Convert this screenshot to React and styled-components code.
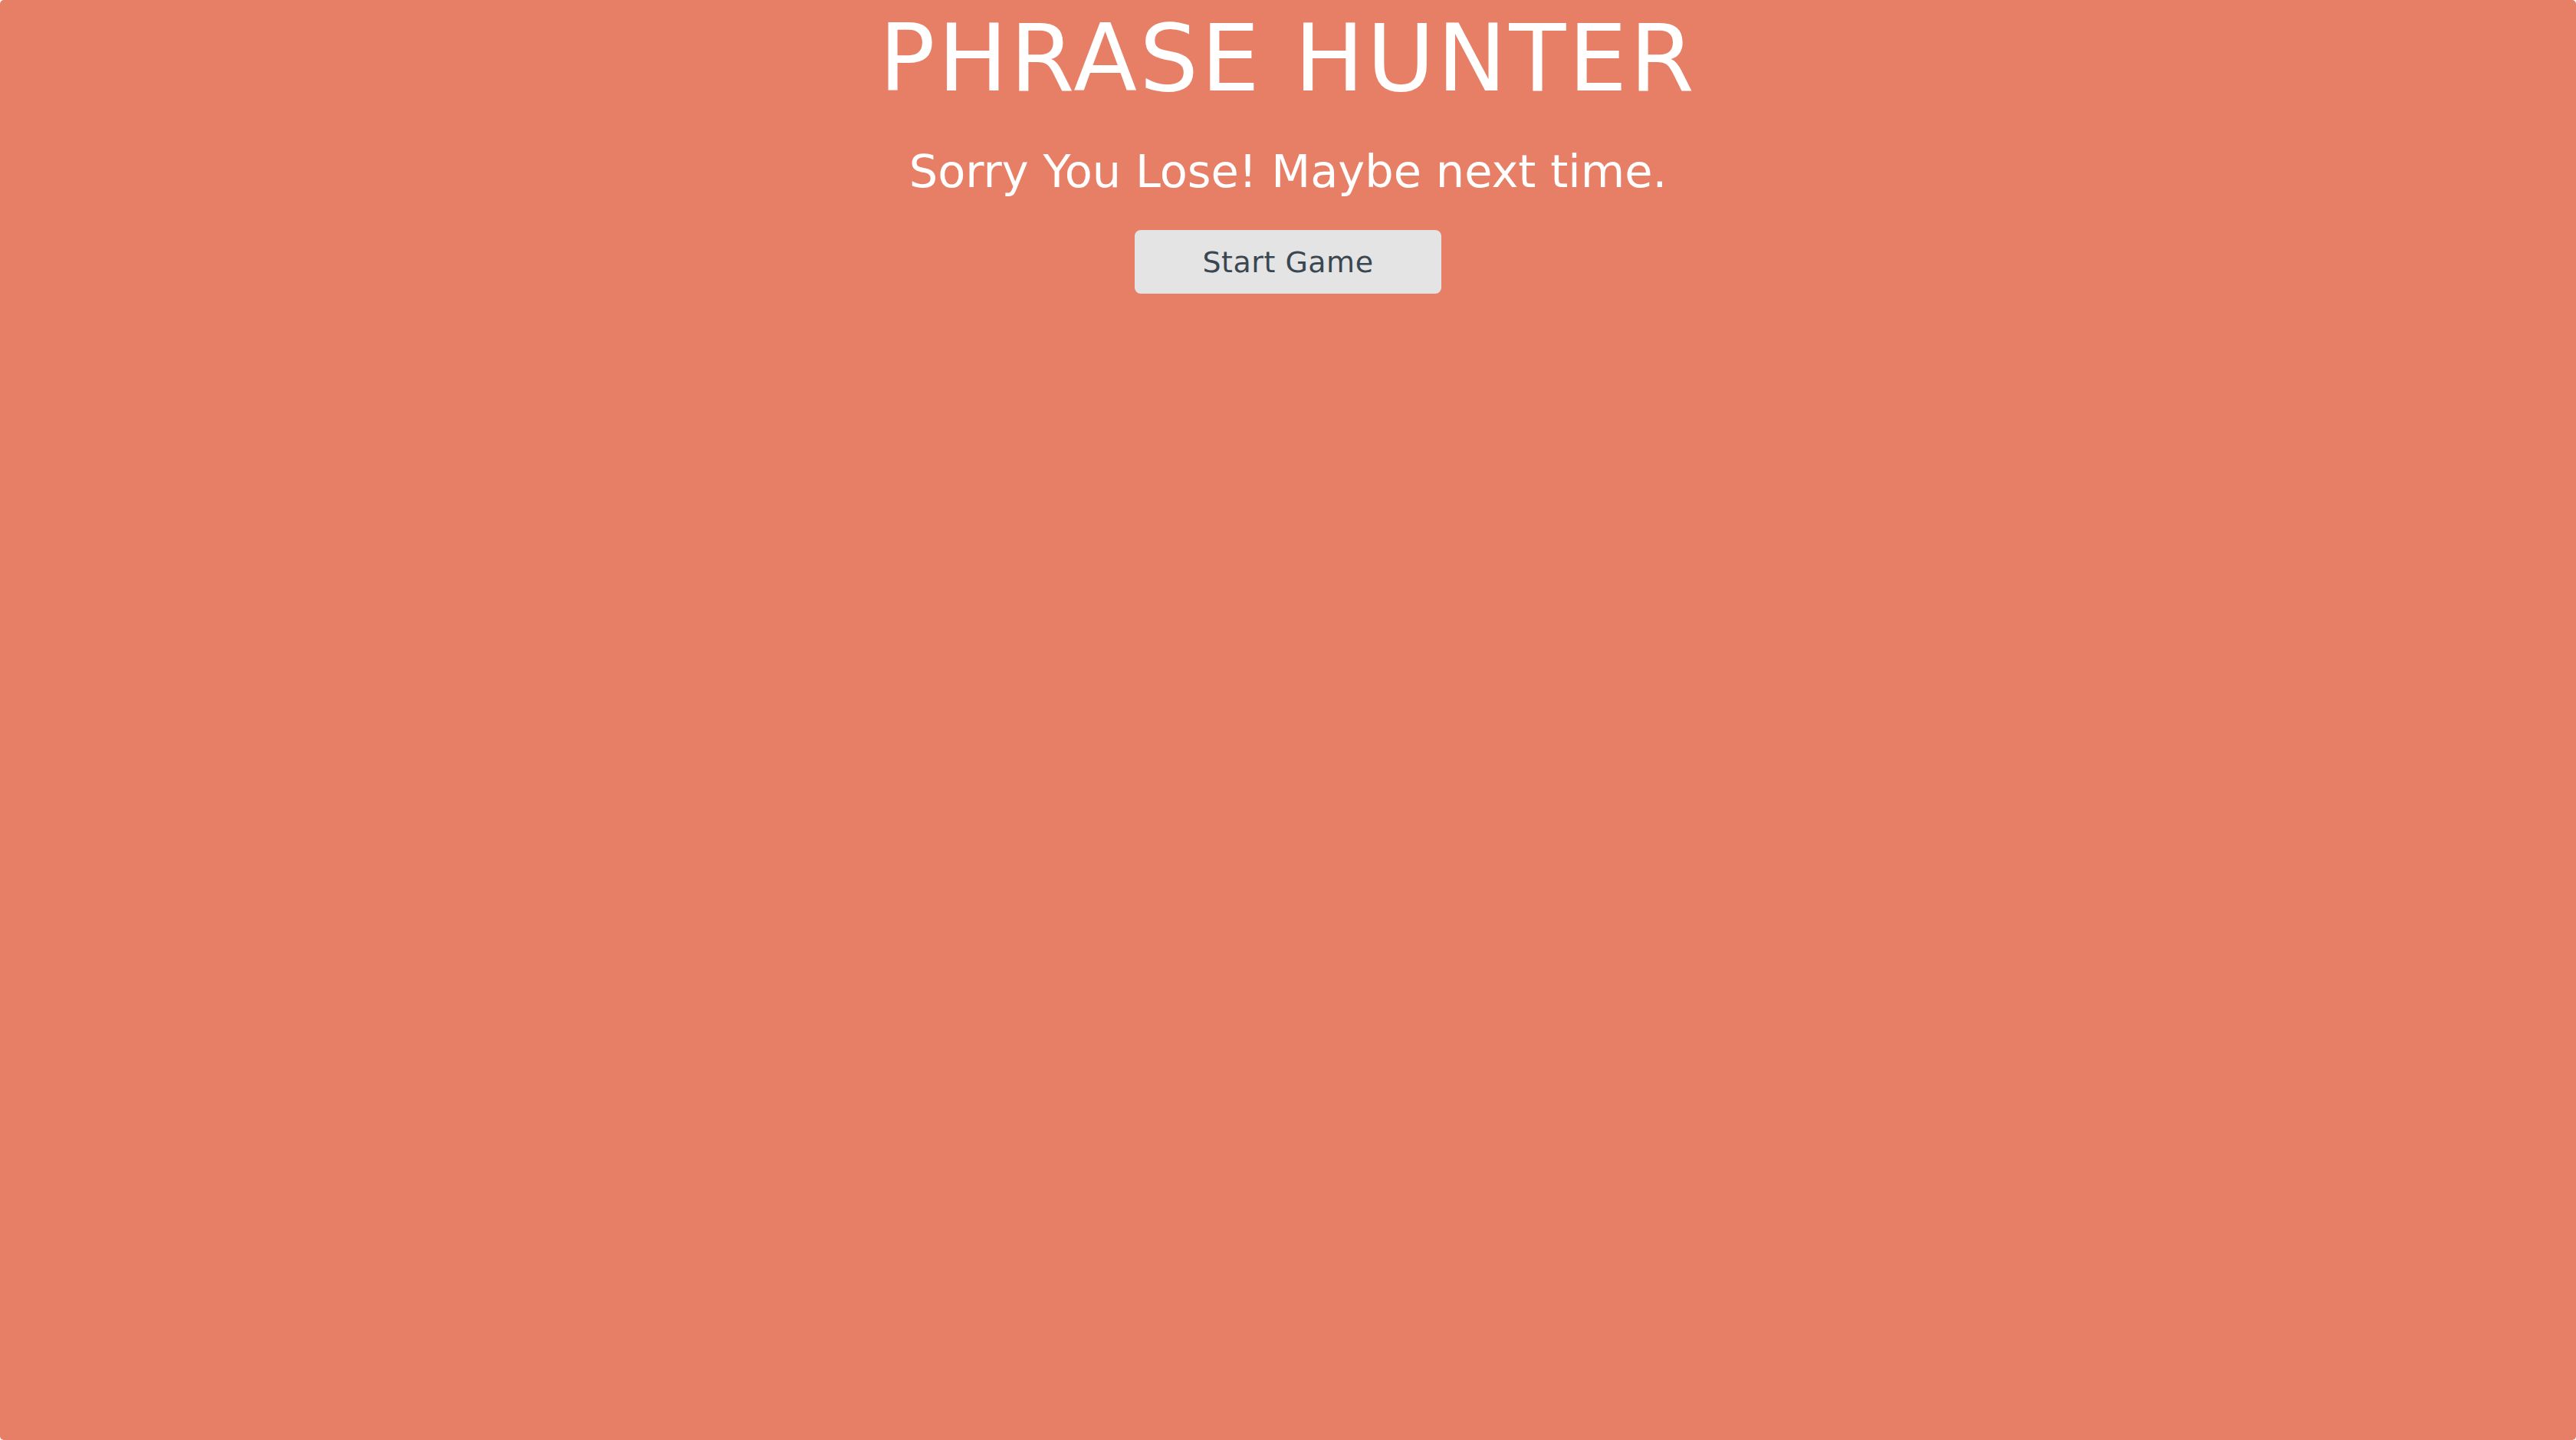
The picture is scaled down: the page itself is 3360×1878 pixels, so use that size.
import React from "react";
import styled, { createGlobalStyle } from "styled-components";

const GlobalStyle = createGlobalStyle`
  html, body {
    margin: 0;
    padding: 0;
    background: #ffffff;
  }
  #root {
    min-height: 100vh;
  }
`;

const Overlay = styled.div`
  display: flex;
  flex-direction: column;
  align-items: center;
  min-height: 100vh;
  box-sizing: border-box;
  padding-top: 16px;
  background-color: #e77f67;
  border-radius: 5px;
  font-family: "DejaVu Sans", "Liberation Sans", sans-serif;
  text-align: center;
`;

const Title = styled.h1`
  margin: 0;
  font-size: 121px;
  line-height: 1;
  font-weight: 400;
  letter-spacing: 3.4px;
  color: #ffffff;
`;

const Message = styled.h2`
  margin: 57px 0 0;
  font-size: 59px;
  line-height: 1;
  font-weight: 400;
  color: #ffffff;
`;

const StartButton = styled.button`
  margin-top: 47px;
  width: 400px;
  height: 83px;
  border: none;
  border-radius: 8px;
  background-color: #e4e4e4;
  color: #3a4750;
  font-family: inherit;
  font-size: 38px;
  letter-spacing: 0.5px;
  cursor: pointer;
`;

function App() {
  return (
    <>
      <GlobalStyle />
      <Overlay>
        <Title>PHRASE HUNTER</Title>
        <Message>Sorry You Lose! Maybe next time.</Message>
        <StartButton>Start Game</StartButton>
      </Overlay>
    </>
  );
}

export default App;
